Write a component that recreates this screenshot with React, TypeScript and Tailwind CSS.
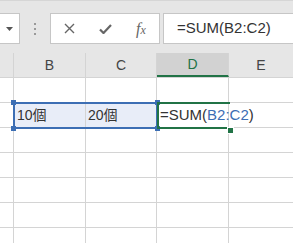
import React from "react";

const font = { fontFamily: '"Liberation Sans", "Noto Sans CJK JP", sans-serif' };

function Row({ children }: { children?: React.ReactNode }) {
  return (
    <div className="flex h-[25px] border-b border-[#d4d4d4]">
      <div className="w-[14px] shrink-0 border-r border-[#d4d4d4]" />
      {children ?? (
        <>
          <div className="w-[72px] shrink-0 border-r border-[#d4d4d4]" />
          <div className="w-[71px] shrink-0 border-r border-[#d4d4d4]" />
          <div className="w-[72px] shrink-0 border-r border-[#d4d4d4]" />
          <div className="flex-1" />
        </>
      )}
    </div>
  );
}

export default function App() {
  return (
    <div className="relative w-[293px] h-[243px] overflow-hidden bg-white text-[#333]" style={font}>
      {/* formula bar */}
      <div className="h-[53px] bg-[#e6e6e6] border-t border-[#d6d6d6] pt-[12px] flex items-start">
        <div className="w-[20px] h-[31px] bg-white border border-l-0 border-[#c6c6c6] flex items-center justify-center">
          <svg width="7" height="4" viewBox="0 0 7 4"><path d="M0 0h7L3.5 4z" fill="#555" /></svg>
        </div>
        <div className="w-[30px] h-[31px] flex flex-col items-center justify-center gap-[3px]">
          <div className="w-[2px] h-[2px] bg-[#999]" />
          <div className="w-[2px] h-[2px] bg-[#999]" />
          <div className="w-[2px] h-[2px] bg-[#999]" />
        </div>
        <div className="w-[110px] h-[31px] bg-white border border-[#c6c6c6] flex items-center">
          <div className="w-[36px] flex justify-center">
            <svg width="11" height="11" viewBox="0 0 11 11"><path d="M1 1L10 10M10 1L1 10" stroke="#666" strokeWidth="1.4" /></svg>
          </div>
          <div className="w-[36px] flex justify-center">
            <svg width="13" height="10" viewBox="0 0 13 10"><path d="M1 5.5L4.5 9L12 1" stroke="#666" strokeWidth="2.2" fill="none" /></svg>
          </div>
          <div className="w-[36px] flex justify-center items-center text-[#666] italic" style={{ fontFamily: '"Liberation Serif", serif' }}>
            <span className="text-[16px]">f</span><span className="text-[12px] mt-[3px]">x</span>
          </div>
        </div>
        <div className="ml-[3px] flex-1 h-[31px] bg-white border border-r-0 border-[#c6c6c6] flex items-center pl-[13px] text-[15px] text-[#333]">
          =SUM(B2:C2)
        </div>
      </div>
      {/* header */}
      <div className="flex h-[25px] bg-[#e6e6e6] border-b border-[#d4d4d4] text-[14px] text-[#444]">
        <div className="w-[14px] shrink-0 border-r border-[#d4d4d4]" />
        <div className="w-[72px] shrink-0 border-r border-[#d4d4d4] flex items-center justify-center">B</div>
        <div className="w-[71px] shrink-0 border-r border-[#d4d4d4] flex items-center justify-center">C</div>
        <div className="w-[72px] shrink-0 border-r border-[#d4d4d4] bg-[#d2d2d2] border-b-2 border-b-[#217346] flex items-center justify-center text-[#217346]">D</div>
        <div className="flex-1 flex items-center justify-center">E</div>
      </div>
      <Row />
      <Row>
        <div className="w-[72px] shrink-0 border-r border-[#d4d4d4] bg-[#e8edf8] flex items-center pl-[3px] text-[14px]">10個</div>
        <div className="w-[71px] shrink-0 border-r border-[#d4d4d4] bg-[#e8edf8] flex items-center pl-[2px] text-[14px]">20個</div>
        <div className="w-[72px] shrink-0 border-r border-[#d4d4d4] flex items-center pl-[3px] text-[15px] whitespace-nowrap overflow-visible">
          <span>=SUM(</span><span className="text-[#3c6eb4]">B2:C2</span><span>)</span>
        </div>
        <div className="flex-1" />
      </Row>
      <Row />
      <Row />
      <Row />
      <Row />
      <Row />
      {/* blue reference range */}
      <div className="absolute left-[13px] top-[102px] w-[145px] h-[27px] border-2 border-[#3c6eb4]" />
      <div className="absolute left-[11px] top-[100px] w-[5px] h-[5px] bg-[#3c6eb4]" />
      <div className="absolute left-[11px] top-[126px] w-[5px] h-[5px] bg-[#3c6eb4]" />
      <div className="absolute left-[155px] top-[100px] w-[5px] h-[5px] bg-[#3c6eb4]" />
      <div className="absolute left-[155px] top-[126px] w-[5px] h-[5px] bg-[#3c6eb4]" />
      {/* green active cell */}
      <div className="absolute left-[157px] top-[102px] w-[73px] h-[27px] border-2 border-r-0 border-[#217346]" />
      <div className="absolute left-[227px] top-[127px] w-[5px] h-[5px] bg-[#217346] border border-white box-content" />
    </div>
  );
}
